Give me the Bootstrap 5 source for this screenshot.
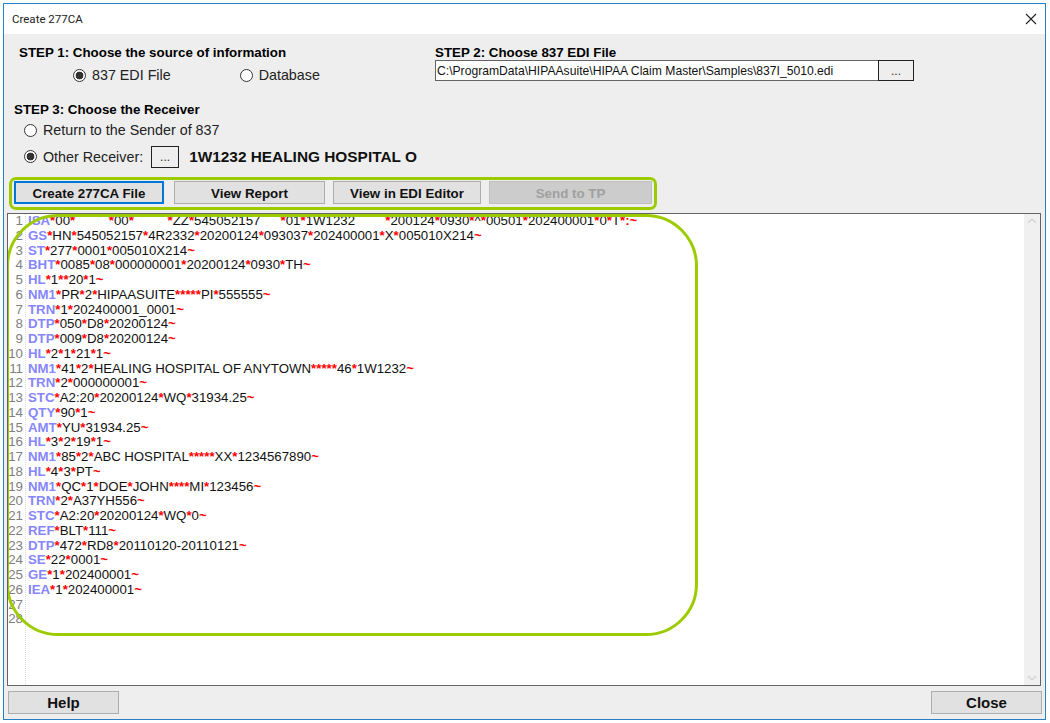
<!DOCTYPE html>
<html lang="en">
<head>
<meta charset="utf-8">
<title>Create 277CA</title>
<link href="https://cdn.jsdelivr.net/npm/bootstrap@5.3.0/dist/css/bootstrap.min.css" rel="stylesheet">
<style>
html,body{background:#fff;margin:0;height:723px;overflow:hidden}
body{font-family:"Liberation Sans",Arial,sans-serif;font-size:13.33px;color:#000;padding:3px 4px 0 3px}
.dlg{height:717px;border:1px solid #2b7fc3;background:#eee;position:relative}
.dlg-title{height:30px;background:#fff;padding:0 8px 0 8px;font:11.5px Roboto,sans-serif;color:#222}
.dlg-x{width:12px;height:12px}
.top-pane{height:63px}
.step-one{width:431px;padding:11px 0 0 15px}
.step-lbl{font-weight:700;font-size:13.33px;line-height:16px}
.step-two{padding-top:11px}
.path-box{height:21px;width:479px;margin-top:-1px}
.path-in{flex:1 1 auto;height:21px;border:1px solid #646464;border-right:0;border-radius:0;background:#fff;padding:0 1px;font:12.15px "Liberation Sans",sans-serif;color:#111;box-shadow:none}
.dots{border:1px solid #222;background:#eee;border-radius:0;padding:0;line-height:14px;font-size:12px;color:#333;height:21px;flex:none}
.dots-a{width:36px}
.dots-b{width:28px;height:22px}
.opt{font-size:14.3px;line-height:18px;color:#222;margin:0}
.opt input{appearance:none;-webkit-appearance:none;width:13px;height:13px;border:1px solid #333;border-radius:50%;background:#fff;margin:0 6px 0 0;flex:none;display:block}
.opt input:checked{background:radial-gradient(circle,#333 0,#333 3.6px,#fff 4.2px)}
.src-opts{padding:5px 0 0 54px}
.src-gap{width:69px}
.recv-pane{height:80px;padding:5px 0 0 10px}
.recv-opts{padding:3px 0 0 10px}
.recv-two{margin-top:6px}
.recv-name{font-weight:700;font-size:15.4px;margin-left:10px;color:#111}
.act-ring{width:648px;height:33px;margin-left:5px;border:3px solid #9ccc00;border-radius:7px;padding:1px 2px;gap:10px}
.act-btn{height:23px;background:#e1e1e1;border:1px solid #adadad;border-radius:0;padding:2px 0 0;font-weight:700;font-size:13.33px;line-height:18px;color:#111}
.act-btn.on{border:2px solid #0078d7;width:150px;padding-top:2px}
.w-report{width:151px}
.w-edit{width:148px;margin-left:-2px}
.w-send{width:163px;margin-left:-2px}
.act-btn:disabled{background:#ccc;border-color:#bfbfbf;color:#a0a0a0;opacity:1}
.edi-box{height:473px;margin:3px 4px 0 3px;border:1px solid #646464;background:#fff;position:relative;overflow:hidden}
.edi-lines{flex:1 1 auto;background:linear-gradient(#d9d9d9 50%,transparent 50%) 17px 0/1px 2px repeat-y}
.edi-row{height:14.76px;line-height:14.76px;white-space:pre;font-size:13.25px;color:#111;word-spacing:-.32px}
.num{display:inline-block;width:15px;text-align:right;color:#808080;margin-right:5px;font-size:13.33px}
.edi-row b{font-weight:700;color:#8686ff}
.edi-row i{font-style:normal;font-weight:700;color:#f00}
.edi-scroll{width:16px;background:#f0f0f0;padding:4px 3px}
.edi-scroll svg{display:block;width:10px;height:6px}
.foot-pane{padding:5px 3px 0 4px}
.foot-btn{width:111px;height:23px;padding:0;line-height:20px;font-size:15px}
.ring-big{position:absolute;left:-2px;top:0;width:692px;height:422px;border:3px solid #9ccc00;border-radius:52px;pointer-events:none}
</style>
</head>
<body>
<div class="dlg d-flex flex-column">
  <div class="dlg-title d-flex align-items-center justify-content-between">
    <span>Create 277CA</span>
    <svg class="dlg-x" viewBox="0 0 12 12" aria-label="Close"><path d="M1 1 11 11M11 1 1 11" stroke="#222" stroke-width="1.1" fill="none"/></svg>
  </div>
  <div class="top-pane d-flex">
    <div class="step-one">
      <div class="step-lbl">STEP 1: Choose the source of information</div>
      <div class="src-opts d-flex">
        <label class="opt d-flex align-items-center"><input type="radio" name="src" checked>837 EDI File</label>
        <span class="src-gap"></span>
        <label class="opt d-flex align-items-center"><input type="radio" name="src">Database</label>
      </div>
    </div>
    <div class="step-two">
      <div class="step-lbl">STEP 2: Choose 837 EDI File</div>
      <div class="path-box d-flex">
        <input class="path-in form-control" type="text" value="C:\ProgramData\HIPAAsuite\HIPAA Claim Master\Samples\837I_5010.edi">
        <button class="btn dots dots-a" type="button">...</button>
      </div>
    </div>
  </div>
  <div class="recv-pane">
    <div class="step-lbl">STEP 3: Choose the Receiver</div>
    <div class="recv-opts">
      <label class="opt d-flex align-items-center"><input type="radio" name="recv">Return to the Sender of 837</label>
      <div class="recv-two d-flex align-items-center">
        <label class="opt d-flex align-items-center"><input type="radio" name="recv" checked>Other Receiver:</label>
        <button class="btn dots dots-b ms-2" type="button">...</button>
        <span class="recv-name">1W1232 HEALING HOSPITAL O</span>
      </div>
    </div>
  </div>
  <div class="act-ring d-flex">
    <button class="btn act-btn on" type="button">Create 277CA File</button>
    <button class="btn act-btn w-report" type="button">View Report</button>
    <button class="btn act-btn w-edit" type="button">View in EDI Editor</button>
    <button class="btn act-btn w-send" type="button" disabled>Send to TP</button>
  </div>
  <div class="edi-box d-flex">
    <div class="edi-lines">
<div class="edi-row"><span class="num">1</span><b>ISA</b><i>*</i>00<i>*</i>          <i>*</i>00<i>*</i>          <i>*</i>ZZ<i>*</i>545052157      <i>*</i>01<i>*</i>1W1232         <i>*</i>200124<i>*</i>0930<i>*</i>^<i>*</i>00501<i>*</i>202400001<i>*</i>0<i>*</i>T<i>*:~</i></div>
<div class="edi-row"><span class="num">2</span><b>GS</b><i>*</i>HN<i>*</i>545052157<i>*</i>4R2332<i>*</i>20200124<i>*</i>093037<i>*</i>202400001<i>*</i>X<i>*</i>005010X214<i>~</i></div>
<div class="edi-row"><span class="num">3</span><b>ST</b><i>*</i>277<i>*</i>0001<i>*</i>005010X214<i>~</i></div>
<div class="edi-row"><span class="num">4</span><b>BHT</b><i>*</i>0085<i>*</i>08<i>*</i>000000001<i>*</i>20200124<i>*</i>0930<i>*</i>TH<i>~</i></div>
<div class="edi-row"><span class="num">5</span><b>HL</b><i>*</i>1<i>**</i>20<i>*</i>1<i>~</i></div>
<div class="edi-row"><span class="num">6</span><b>NM1</b><i>*</i>PR<i>*</i>2<i>*</i>HIPAASUITE<i>*****</i>PI<i>*</i>555555<i>~</i></div>
<div class="edi-row"><span class="num">7</span><b>TRN</b><i>*</i>1<i>*</i>202400001_0001<i>~</i></div>
<div class="edi-row"><span class="num">8</span><b>DTP</b><i>*</i>050<i>*</i>D8<i>*</i>20200124<i>~</i></div>
<div class="edi-row"><span class="num">9</span><b>DTP</b><i>*</i>009<i>*</i>D8<i>*</i>20200124<i>~</i></div>
<div class="edi-row"><span class="num">10</span><b>HL</b><i>*</i>2<i>*</i>1<i>*</i>21<i>*</i>1<i>~</i></div>
<div class="edi-row"><span class="num">11</span><b>NM1</b><i>*</i>41<i>*</i>2<i>*</i>HEALING HOSPITAL OF ANYTOWN<i>*****</i>46<i>*</i>1W1232<i>~</i></div>
<div class="edi-row"><span class="num">12</span><b>TRN</b><i>*</i>2<i>*</i>000000001<i>~</i></div>
<div class="edi-row"><span class="num">13</span><b>STC</b><i>*</i>A2:20<i>*</i>20200124<i>*</i>WQ<i>*</i>31934.25<i>~</i></div>
<div class="edi-row"><span class="num">14</span><b>QTY</b><i>*</i>90<i>*</i>1<i>~</i></div>
<div class="edi-row"><span class="num">15</span><b>AMT</b><i>*</i>YU<i>*</i>31934.25<i>~</i></div>
<div class="edi-row"><span class="num">16</span><b>HL</b><i>*</i>3<i>*</i>2<i>*</i>19<i>*</i>1<i>~</i></div>
<div class="edi-row"><span class="num">17</span><b>NM1</b><i>*</i>85<i>*</i>2<i>*</i>ABC HOSPITAL<i>*****</i>XX<i>*</i>1234567890<i>~</i></div>
<div class="edi-row"><span class="num">18</span><b>HL</b><i>*</i>4<i>*</i>3<i>*</i>PT<i>~</i></div>
<div class="edi-row"><span class="num">19</span><b>NM1</b><i>*</i>QC<i>*</i>1<i>*</i>DOE<i>*</i>JOHN<i>****</i>MI<i>*</i>123456<i>~</i></div>
<div class="edi-row"><span class="num">20</span><b>TRN</b><i>*</i>2<i>*</i>A37YH556<i>~</i></div>
<div class="edi-row"><span class="num">21</span><b>STC</b><i>*</i>A2:20<i>*</i>20200124<i>*</i>WQ<i>*</i>0<i>~</i></div>
<div class="edi-row"><span class="num">22</span><b>REF</b><i>*</i>BLT<i>*</i>111<i>~</i></div>
<div class="edi-row"><span class="num">23</span><b>DTP</b><i>*</i>472<i>*</i>RD8<i>*</i>20110120-20110121<i>~</i></div>
<div class="edi-row"><span class="num">24</span><b>SE</b><i>*</i>22<i>*</i>0001<i>~</i></div>
<div class="edi-row"><span class="num">25</span><b>GE</b><i>*</i>1<i>*</i>202400001<i>~</i></div>
<div class="edi-row"><span class="num">26</span><b>IEA</b><i>*</i>1<i>*</i>202400001<i>~</i></div>
<div class="edi-row"><span class="num">27</span></div>
<div class="edi-row"><span class="num">28</span></div>
    </div>
    <div class="edi-scroll d-flex flex-column justify-content-between">
      <svg viewBox="0 0 10 6"><path d="M1 5 5 1 9 5" fill="none" stroke="#d0d0d0" stroke-width="1.2"/></svg>
      <svg viewBox="0 0 10 6"><path d="M1 1 5 5 9 1" fill="none" stroke="#d0d0d0" stroke-width="1.2"/></svg>
    </div>
    <div class="ring-big"></div>
  </div>
  <div class="foot-pane d-flex justify-content-between">
    <button class="btn act-btn foot-btn" type="button">Help</button>
    <button class="btn act-btn foot-btn" type="button">Close</button>
  </div>
</div>
<script src="https://cdn.jsdelivr.net/npm/bootstrap@5.3.0/dist/js/bootstrap.bundle.min.js"></script>
</body>
</html>
